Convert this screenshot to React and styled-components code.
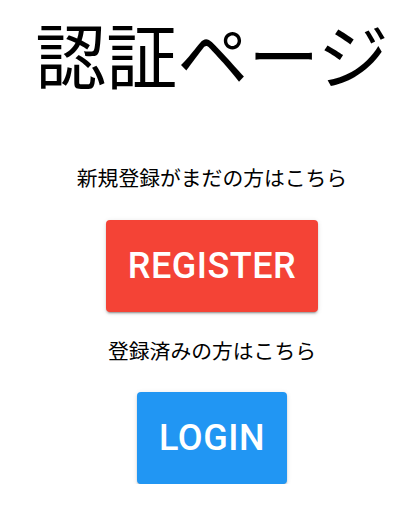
import React from "react";
import styled, { createGlobalStyle } from "styled-components";

const Global = createGlobalStyle`
  html, body { margin: 0; padding: 0; background: #fff; }
  body { font-family: "Noto Sans CJK JP", "Noto Sans", sans-serif; color: #000; }
`;

const Page = styled.div`
  display: flex;
  flex-direction: column;
  align-items: center;
  padding: 9px 0 0 6px;
`;

const Title = styled.h1`
  margin: 0;
  font-size: 71px;
  font-weight: 400;
  line-height: 86px;
  white-space: nowrap;
`;

const Lead = styled.p`
  margin: ${(p) => p.$top}px 0 0;
  font-size: 20.8px;
  line-height: 32px;
  font-weight: 400;
  white-space: nowrap;
`;

const Button = styled.button`
  margin-top: ${(p) => p.$top}px;
  height: 92px;
  padding: 0 22px;
  border: none;
  border-radius: 4px;
  background: ${(p) => p.$bg};
  color: #fff;
  font-family: Roboto, "Liberation Sans", sans-serif;
  font-weight: 500;
  font-size: 36px;
  letter-spacing: 0.5px;
  text-transform: uppercase;
  cursor: pointer;
  box-shadow: 0px 3px 1px -2px rgba(0,0,0,0.2), 0px 2px 2px 0px rgba(0,0,0,0.14), 0px 1px 5px 0px rgba(0,0,0,0.12);
`;

export default function App() {
  return (
    <>
      <Global />
      <Page>
        <Title>認証ページ</Title>
        <Lead $top={66}>新規登録がまだの方はこちら</Lead>
        <Button $top={27} $bg="#f44336">Register</Button>
        <Lead $top={22}>登録済みの方はこちら</Lead>
        <Button $top={26} $bg="#2196f3">Login</Button>
      </Page>
    </>
  );
}
